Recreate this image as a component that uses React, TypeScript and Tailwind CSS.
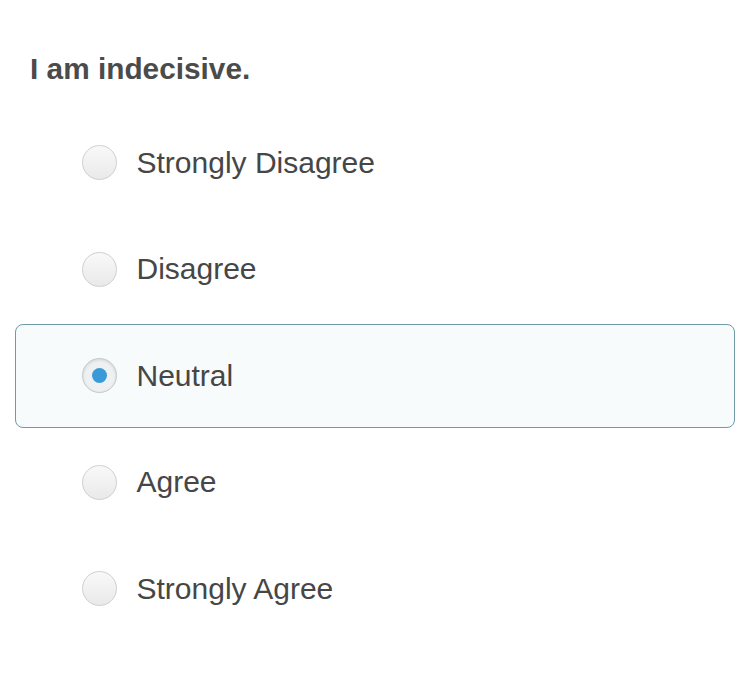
const OPTIONS = ["Strongly Disagree", "Disagree", "Neutral", "Agree", "Strongly Agree"];

function Radio({ checked }: { checked: boolean }) {
  return (
    <span
      className={`grid h-[35px] w-[35px] shrink-0 place-items-center rounded-full border-[1.5px] ${
        checked
          ? "border-[#c4c8cb] bg-[#eef0f2] shadow-[inset_0_1px_3px_rgba(0,0,0,0.12)]"
          : "border-[#cfcfcf] bg-gradient-to-b from-[#f9f9f9] to-[#e9e9e9]"
      }`}
    >
      {checked && <span className="h-[15px] w-[15px] rounded-full bg-[#3a9ad8]" />}
    </span>
  );
}

export default function App() {
  const selected = "Neutral";
  return (
    <div
      className="min-h-[677px] w-[750px] bg-white px-[15px] pt-[54px] text-[#464646]"
      style={{ fontFamily: '"Liberation Sans", Arial, sans-serif' }}
    >
      <h2 className="pl-[15px] text-[29.8px] font-bold leading-none text-[#4b4b4b]">I am indecisive.</h2>
      <div className="mt-[27px] flex flex-col gap-[2.5px]">
        {OPTIONS.map((opt) => {
          const on = opt === selected;
          return (
            <label
              key={opt}
              className={`flex h-[104px] w-[720px] cursor-pointer items-center gap-[20px] rounded-[8px] border-[1.5px] pl-[65.5px] ${
                on ? "border-[#6f9aa6] bg-[#f7fbfc]" : "border-transparent"
              }`}
            >
              <Radio checked={on} />
              <span className="text-[30px] leading-none">{opt}</span>
            </label>
          );
        })}
      </div>
    </div>
  );
}
